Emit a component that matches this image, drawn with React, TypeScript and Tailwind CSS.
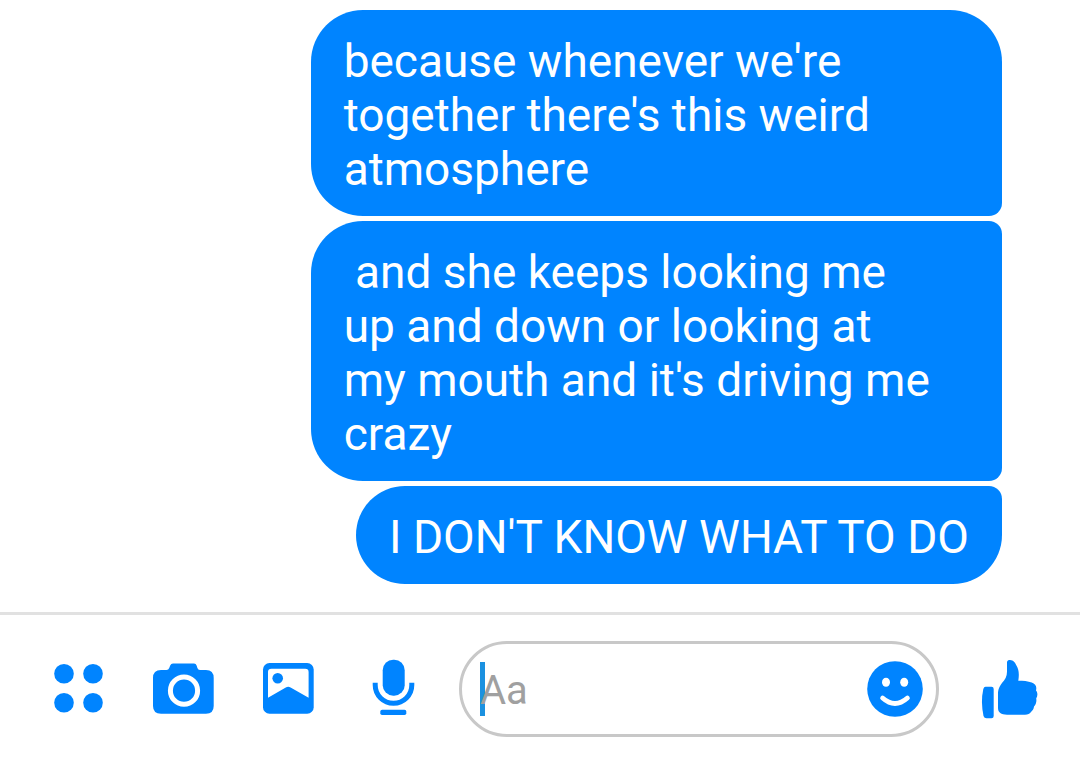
import React from "react";

const messages = [
  {
    text: "because whenever we're\ntogether there's this weird\natmosphere",
    shape: "w-[69%] rounded-l-[52px] rounded-tr-[52px] rounded-br-[13px]",
  },
  {
    text: " and she keeps looking me\nup and down or looking at\nmy mouth and it's driving me\ncrazy",
    shape: "w-[69%] rounded-l-[52px] rounded-r-[13px]",
  },
  {
    text: "I DON'T KNOW WHAT TO DO",
    shape: "rounded-l-[49px] rounded-tr-[13px] rounded-br-[49px]",
  },
];

const iconClass = "h-[66px] w-[65px]";

const DotsIcon = () => (
  <svg className={iconClass} viewBox="0 0 65 66" fill="currentColor">
    <circle cx="18" cy="17.7" r="9.8" />
    <circle cx="47" cy="17.7" r="9.8" />
    <circle cx="18" cy="46.7" r="9.8" />
    <circle cx="47" cy="46.7" r="9.8" />
  </svg>
);

const CameraIcon = () => (
  <svg className={iconClass} viewBox="0 0 65 66" fill="currentColor">
    <path d="M10 14H15.5Q17.500 14 18.200 12L19.200 9.500Q20 7.500 22 7.500H43Q45 7.500 45.600 9.500L46.400 12Q47 14 49 14H55Q62.700 14 62.700 22V50Q62.700 57.700 55 57.700H10Q2 57.700 2 50V22Q2 14 10 14Z" />
    <circle cx="33" cy="34.7" r="13.6" fill="none" stroke="white" strokeWidth="5" />
  </svg>
);

const GalleryIcon = () => (
  <svg className={iconClass} viewBox="0 0 65 66" fill="currentColor">
    <rect x="7" y="7" width="50.7" height="50.7" rx="6.5" />
    <path
      d="M15.5 12.7H49.2Q52.6 12.7 52.6 16V41.7L34.6 31.5Q32.2 30.2 29.8 31.5L12 41.7V16Q12 12.7 15.5 12.7Z"
      fill="white"
    />
    <circle cx="21.7" cy="22.3" r="5.3" />
  </svg>
);

const MicIcon = () => (
  <svg className={iconClass} viewBox="0 0 65 66" fill="currentColor">
    <rect x="21.7" y="3.7" width="22" height="36" rx="10.5" />
    <path
      d="M14.2 26.7V29A18.3 18.3 0 0 0 50.8 29V26.7"
      fill="none"
      stroke="currentColor"
      strokeWidth="5"
    />
    <rect x="19.3" y="53.7" width="26" height="5.3" rx="1.8" />
  </svg>
);

const SmileIcon = () => (
  <svg className="h-[56px] w-[56px]" viewBox="0 0 56 56">
    <circle cx="28" cy="28" r="27.8" fill="currentColor" />
    <ellipse cx="19" cy="21.3" rx="4" ry="4.5" fill="white" />
    <ellipse cx="37.2" cy="21.3" rx="4" ry="4.5" fill="white" />
    <path
      d="M15.6 37Q28 48 40.4 37"
      fill="none"
      stroke="white"
      strokeWidth="4.8"
      strokeLinecap="round"
    />
  </svg>
);

const LikeIcon = () => (
  <svg className={iconClass} viewBox="0 0 65 66" fill="currentColor">
    <path d="M8.5 30.7H14.5Q16.7 30.7 16.7 33V60Q16.7 62.3 14.5 62.3H9.5Q7.3 62.3 6.5 60Q3.5 46 6.3 33Q7 30.7 8.5 30.7Z" />
    <path d="M30 6.5C30 4.5 31.5 4 33 4C36.5 4.2 38 6.5 39.7 10C41.5 13.5 42.5 17 41.3 24.7C46 24.7 51 25 54.7 26.5C58.5 28 60 30 59 34.5C60.8 36.5 60.8 40 59.2 42.5C59.8 45.5 59 48 57 50.5C56.8 53 55.5 54.5 54 56C52.5 58 51 58.7 48 58.7H30C24 58.7 21 56.5 21 52V38C21 33 22.5 30.5 25 27C28 23.5 30 20.5 30 15.7Z" />
  </svg>
);

const actions = [
  { label: "More", icon: <DotsIcon /> },
  { label: "Camera", icon: <CameraIcon /> },
  { label: "Gallery", icon: <GalleryIcon /> },
  { label: "Voice", icon: <MicIcon /> },
];

const Composer = () => {
  return (
    <form className="flex items-center border-t-3 border-[#e1e1e1] pt-[26px] pb-6 pl-[26px] text-[#0084ff]">
      {actions.map((action) => (
        <button
          key={action.label}
          type="button"
          aria-label={action.label}
          className="flex w-[105px] shrink-0 justify-center"
        >
          {action.icon}
        </button>
      ))}

      <div className="relative ml-[13px] flex h-24 min-w-0 flex-1 items-center rounded-full border-3 border-[#c8c8c8] pr-[13px] pl-[18px]">
        <span className="absolute left-[18px] h-[54px] w-[5px] bg-[#1b91e0]" />
        <input
          type="text"
          aria-label="Message"
          placeholder="Aa"
          className="relative h-[54px] min-w-0 flex-1 bg-transparent pt-1 text-[40px] text-black outline-none placeholder:text-[#a0a0a0]"
        />
        <button type="button" aria-label="Emoji" className="shrink-0">
          <SmileIcon />
        </button>
      </div>

      <button
        type="button"
        aria-label="Like"
        className="flex w-[141px] shrink-0 justify-center"
      >
        <LikeIcon />
      </button>
    </form>
  );
};

const App = () => {
  return (
    <main className="bg-white font-[Roboto,sans-serif]">
      <div className="flex flex-col items-end gap-[5px] pt-[10px] pr-[78px] pb-7">
        {messages.map((message) => (
          <p
            key={message.text}
            className={`bg-[#0084ff] px-[33px] pt-6 pb-5 text-[46px] leading-[54px] whitespace-pre-wrap text-white ${message.shape}`}
          >
            {message.text}
          </p>
        ))}
      </div>

      <Composer />
    </main>
  );
};

export default App;
